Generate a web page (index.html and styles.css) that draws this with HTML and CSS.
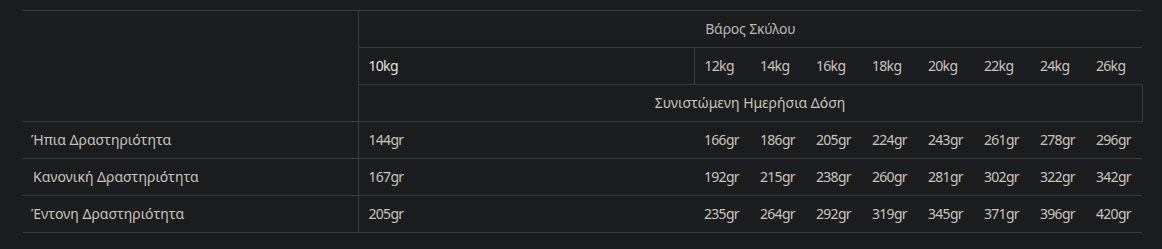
FILE: index.html
```html
<!DOCTYPE html>
<html lang="el">
<head>
<meta charset="utf-8">
<title>Βάρος Σκύλου</title>
<link rel="stylesheet" href="styles.css">
</head>
<body>
<div class="wrap">
<table class="dose-table">
  <colgroup>
    <col class="c-label"><col class="c-first">
    <col class="c-w"><col class="c-w"><col class="c-w"><col class="c-w">
    <col class="c-w"><col class="c-w"><col class="c-w"><col class="c-w">
  </colgroup>
  <thead>
    <tr>
      <th class="corner" rowspan="3"></th>
      <th class="group" colspan="9">Βάρος Σκύλου</th>
    </tr>
    <tr class="weights">
      <th class="first">10kg</th>
      <th>12kg</th><th>14kg</th><th>16kg</th><th>18kg</th>
      <th>20kg</th><th>22kg</th><th>24kg</th><th>26kg</th>
    </tr>
    <tr>
      <th class="dose" colspan="9">Συνιστώμενη Ημερήσια Δόση</th>
    </tr>
  </thead>
  <tbody>
    <tr>
      <td class="label">Ήπια Δραστηριότητα</td>
      <td class="first">144gr</td>
      <td>166gr</td><td>186gr</td><td>205gr</td><td>224gr</td>
      <td>243gr</td><td>261gr</td><td>278gr</td><td>296gr</td>
    </tr>
    <tr>
      <td class="label label-k">Κανονική Δραστηριότητα</td>
      <td class="first">167gr</td>
      <td>192gr</td><td>215gr</td><td>238gr</td><td>260gr</td>
      <td>281gr</td><td>302gr</td><td>322gr</td><td>342gr</td>
    </tr>
    <tr>
      <td class="label">Έντονη Δραστηριότητα</td>
      <td class="first">205gr</td>
      <td>235gr</td><td>264gr</td><td>292gr</td><td>319gr</td>
      <td>345gr</td><td>371gr</td><td>396gr</td><td>420gr</td>
    </tr>
  </tbody>
</table>
</div>
</body>
</html>
```

FILE: styles.css
```css
html, body {
  margin: 0;
  padding: 0;
  background: #1b1c1e;
}

.wrap {
  padding: 10px 20px 0 23px;
}

.dose-table {
  border-collapse: collapse;
  table-layout: fixed;
  width: 1119px;
  font-family: "Noto Sans", "Open Sans", sans-serif;
  font-size: 14px;
  line-height: 20px;
  color: #c8c4bc;
  border-top: 1px solid #3b3b3d;
}

.c-label { width: 335px; }
.c-first { width: 336px; }
.c-w { width: 56px; }

.dose-table th,
.dose-table td {
  padding: 8px 0 8px 10px;
  text-align: left;
  font-weight: 400;
  white-space: nowrap;
  letter-spacing: -0.7px;
  border-bottom: 1px solid #3b3b3d;
  height: 20px;
}

.dose-table .corner {
  border-right: 1px solid #3b3b3d;
  border-bottom: 1px solid #3b3b3d;
}

.dose-table .group {
  text-align: center;
  padding-left: 0;
  letter-spacing: -0.2px;
  color: #b9b6b0;
}

.weights .first {
  border-right: 1px solid #3b3b3d;
  color: #e4e2de;
}

.dose-table .dose {
  text-align: center;
  padding-left: 0;
  letter-spacing: 0;
  border-right: 1px solid #3b3b3d;
}

.dose-table .label {
  padding-left: 8px;
  letter-spacing: 0;
  border-right: 1px solid #3b3b3d;
}

.dose-table .label-k {
  padding-left: 10px;
}
```
